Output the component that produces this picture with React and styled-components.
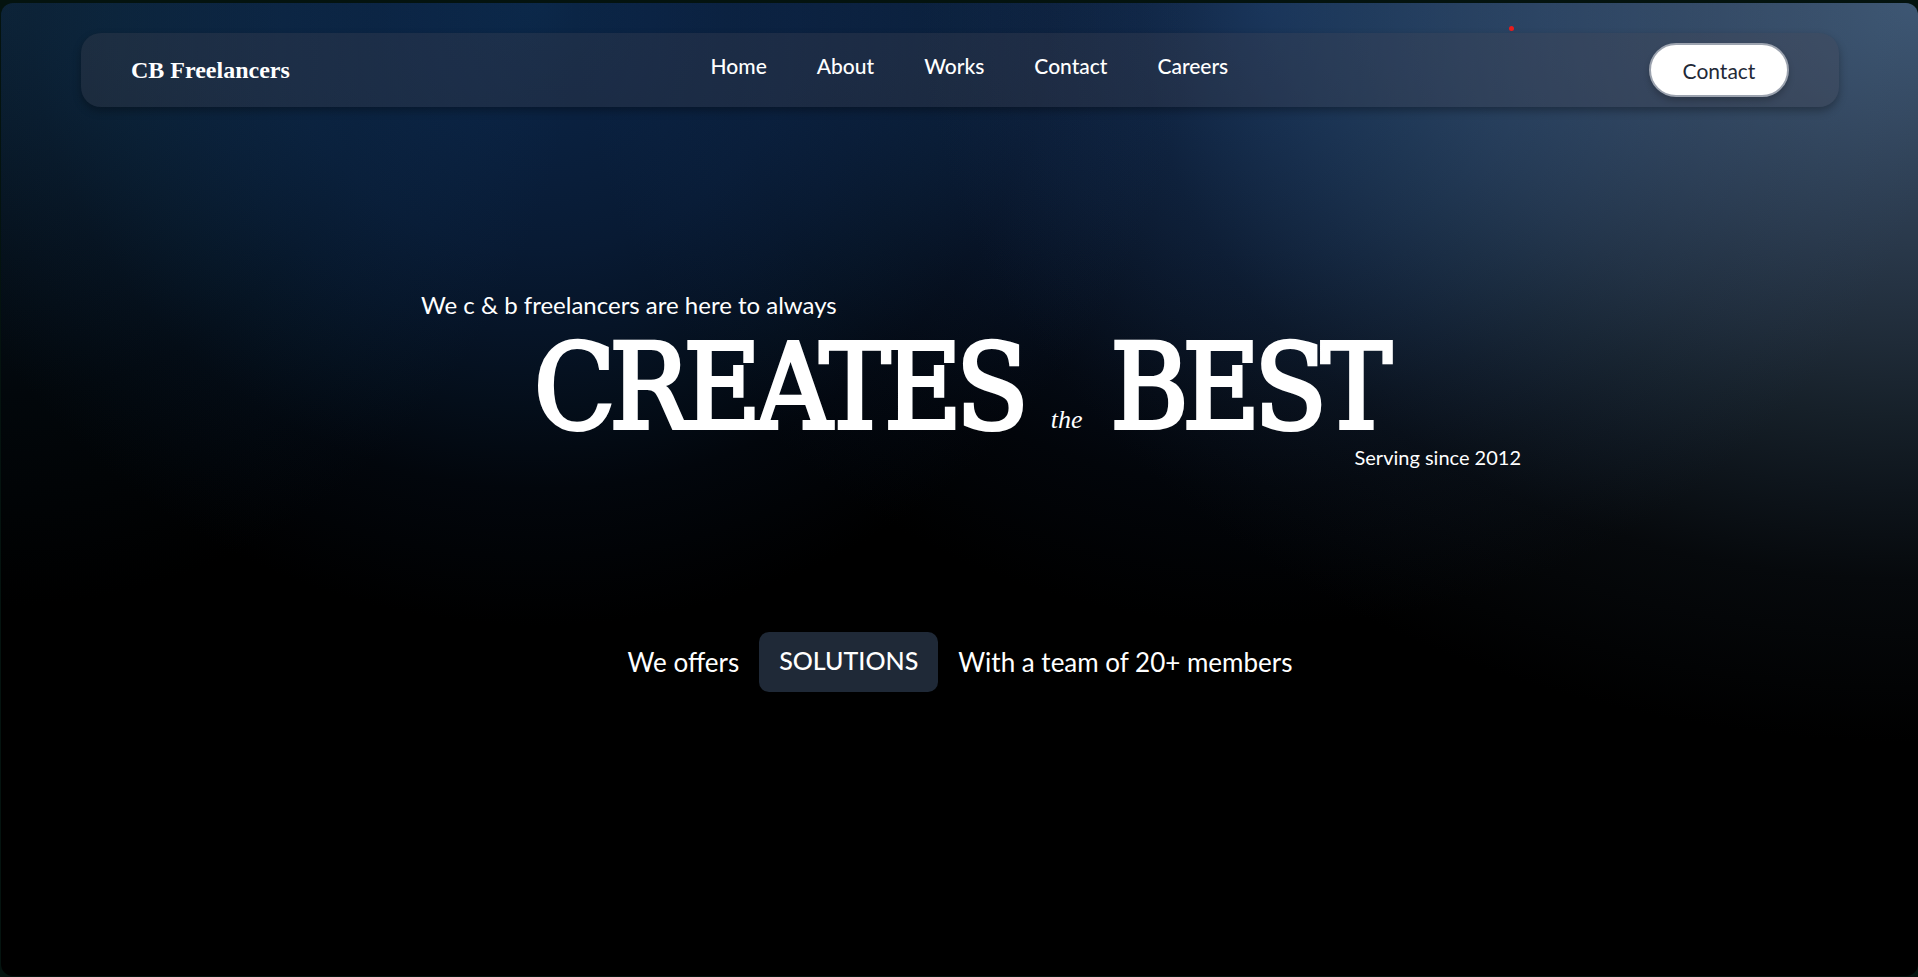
import React from "react";
import styled, { createGlobalStyle } from "styled-components";

const sans = `Lato, "Open Sans", "Liberation Sans", sans-serif`;
const serif = `"DejaVu Serif Condensed", "DejaVu Serif", "Liberation Serif", serif`;

const GlobalStyle = createGlobalStyle`
  *, *::before, *::after { box-sizing: border-box; }
  body { margin: 0; background: #04130f; color: #fff; font-family: ${sans}; }
  a { color: inherit; text-decoration: none; }
  h1, p, ul { margin: 0; padding: 0; }
`;

const Page = styled.div`
  min-height: 100vh;
  padding: 3px 0 1px 1px;
`;

const Frame = styled.div`
  position: relative;
  min-height: calc(100vh - 4px);
  padding: 30px 79px 60px 80px;
  border-radius: 12px;
  background-color: #000;
  background-image:
    radial-gradient(ellipse 34% 64% at 28% 0%, #0b2748, #0a2140 18%, #081a33 40%, #061427 53%, #040e1a 65%, #02060c 78%, #000),
    radial-gradient(ellipse 36% 64% at 66% 0%, #0c2346, #0a1d3a 20%, #08162c 40%, #061020 53%, #040a14 65%, #02050a 78%, #000),
    radial-gradient(ellipse 52% 76% at 100% 0%, #3d5672, #354961 15%, #29384a 33%, #1f2b38 46%, #162029 56%, #0e151c 66%, #06090c 78%, #000),
    radial-gradient(ellipse 30% 62% at 0% 0%, #0b1f30, #081826 20%, #050f18 42%, #02070b 65%, #000);
  background-blend-mode: screen;
`;

const Header = styled.header`
  display: flex;
  align-items: center;
  justify-content: space-between;
  height: 74px;
  padding: 0 50px;
  border-radius: 20px;
  background: rgba(68, 70, 84, 0.3);
  box-shadow: 0 4px 8px rgba(0, 0, 0, 0.3);
`;

const Logo = styled.a`
  font-family: "Liberation Serif", serif;
  font-size: 24px;
  font-weight: 700;
`;

const NavList = styled.ul`
  display: flex;
  gap: 50px;
  padding-bottom: 8px;
  list-style: none;
  font-size: 21px;
  font-weight: 500;
  line-height: 28px;
`;

const ContactButton = styled.button`
  width: 140px;
  height: 54px;
  border: 2px solid #9ca3af;
  border-radius: 27px;
  background: #fff;
  color: #1f2937;
  font-family: inherit;
  font-size: 21px;
  box-shadow: 0 4px 6px rgba(0, 0, 0, 0.2);
`;

const Cursor = styled.span`
  position: absolute;
  top: 23px;
  left: calc(79% - 6px);
  width: 5px;
  height: 5px;
  border-radius: 50%;
  background: #e81c1c;
`;

const Hero = styled.main`
  display: flex;
  flex-direction: column;
  max-width: 1122px;
  margin: 184px auto 0;
`;

const Tagline = styled.p`
  padding-left: 22px;
  font-size: 24px;
  line-height: 28px;
`;

const Headline = styled.h1`
  display: flex;
  align-items: baseline;
  justify-content: center;
  gap: 28px;
  margin-top: 12px;
  font-family: ${serif};
  font-size: 118px;
  font-weight: 400;
  line-height: 112px;
`;

const Word = styled.span`
  letter-spacing: -0.05em;
  -webkit-text-stroke: 4px #fff;
`;

const Script = styled.em`
  font-family: "Liberation Serif", serif;
  font-size: 26px;
  line-height: 32px;
`;

const Since = styled.p`
  align-self: flex-end;
  font-size: 20px;
  line-height: 28px;
`;

const Offer = styled.section`
  display: flex;
  align-items: center;
  justify-content: center;
  gap: 20px;
  margin-top: 161px;
  font-size: 26px;
  line-height: 32px;
`;

const Badge = styled.strong`
  height: 60px;
  padding: 12px 20px;
  border-radius: 10px;
  background: #1f2937;
  font-size: 25px;
  font-weight: 500;
`;

const links = ["Home", "About", "Works", "Contact", "Careers"];

export default function App() {
  return (
    <Page>
      <GlobalStyle />
      <Frame>
        <Header>
          <Logo href="#home">CB Freelancers</Logo>
          <nav>
            <NavList>
              {links.map((link) => (
                <li key={link}>
                  <a href={`#${link.toLowerCase()}`}>{link}</a>
                </li>
              ))}
            </NavList>
          </nav>
          <ContactButton type="button">Contact</ContactButton>
        </Header>
        <Cursor />
        <Hero>
          <Tagline>We c &amp; b freelancers are here to always</Tagline>
          <Headline>
            <Word>CREATES</Word>
            <Script>the</Script>
            <Word>BEST</Word>
          </Headline>
          <Since>Serving since 2012</Since>
        </Hero>
        <Offer>
          <p>We offers</p>
          <Badge>SOLUTIONS</Badge>
          <p>With a team of 20+ members</p>
        </Offer>
      </Frame>
    </Page>
  );
}
